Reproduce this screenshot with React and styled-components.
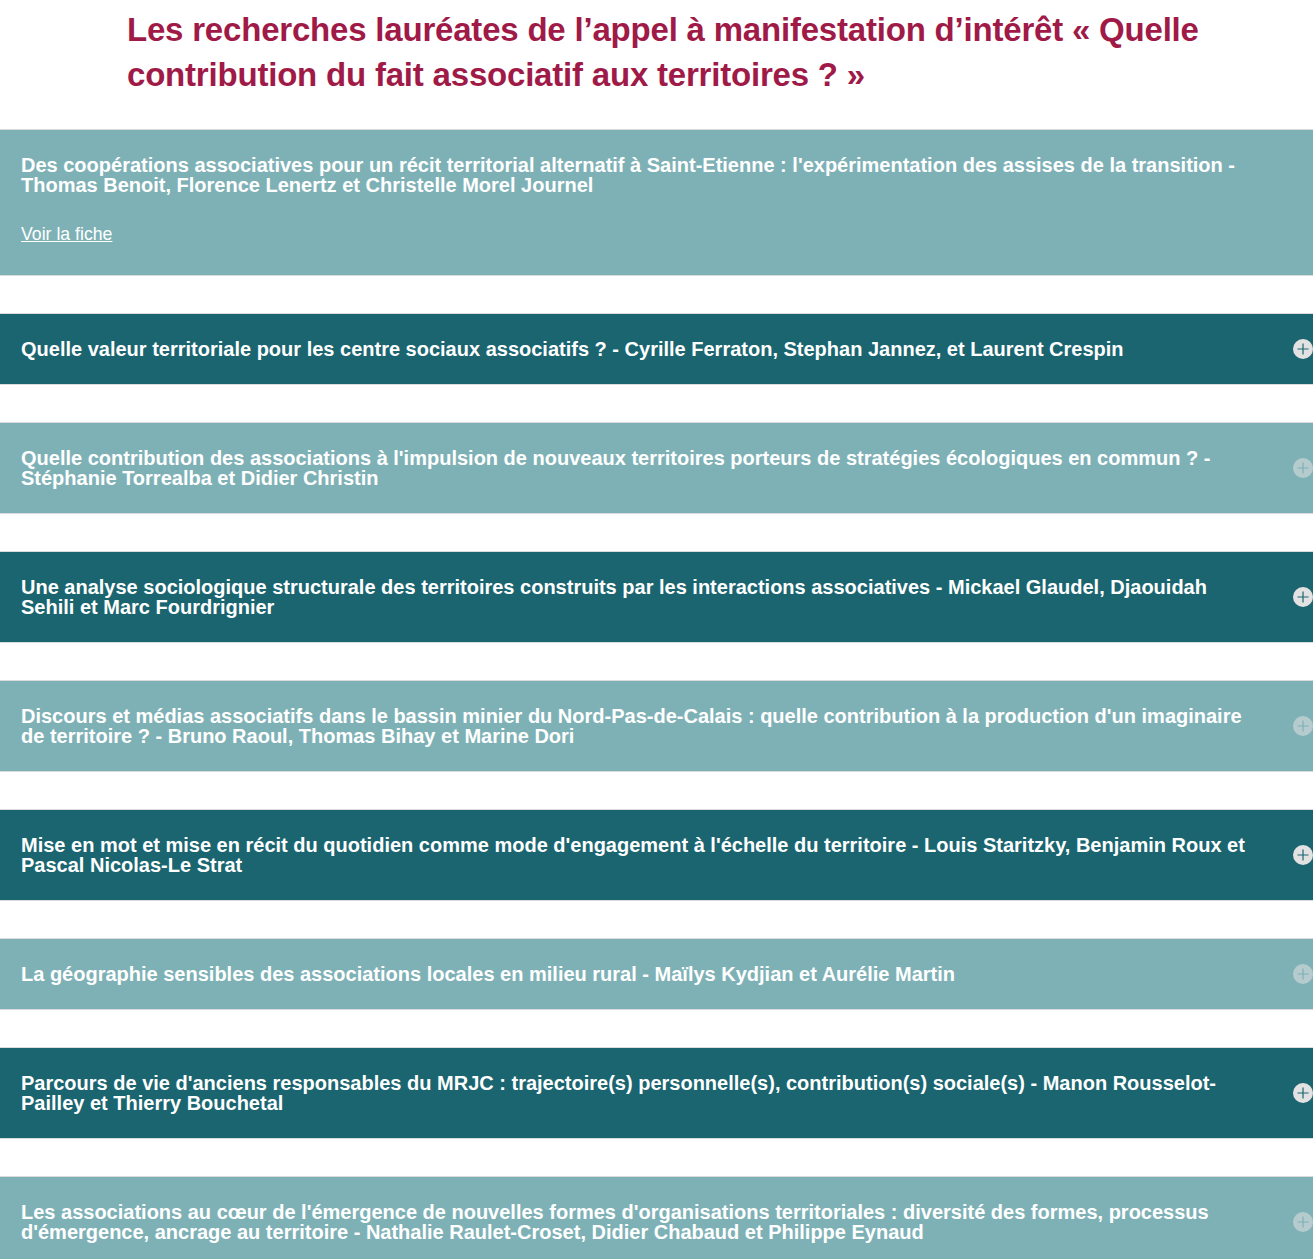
import React from "react";
import styled, { createGlobalStyle } from "styled-components";

const Global = createGlobalStyle`
  html, body { margin: 0; padding: 0; background: #fff; }
  body { font-family: "Liberation Sans", Arial, sans-serif; }
`;

const Page = styled.div`
  width: 1313px;
  overflow: hidden;
`;

const Title = styled.h1`
  margin: 0;
  padding: 7px 80px 32px 127px;
  color: #a01a48;
  font-family: "Liberation Sans", Arial, sans-serif;
  font-weight: 700;
  font-size: 33px;
  line-height: 45px;
  letter-spacing: -0.2px;
`;

const List = styled.div`
  display: flex;
  flex-direction: column;
  gap: 37px;
`;

const Panel = styled.div`
  background: ${(p) => (p.$dark ? "#1a6570" : "#7eb1b6")};
  border-top: 1px solid #d9dcdc;
  border-bottom: 1px solid #d9dcdc;
  display: flex;
  align-items: center;
  padding: 25px 0 25px 21px;
  ${(p) => p.$open && "align-items: flex-start; padding-bottom: 31px;"}
`;

const Body = styled.div`
  flex: 1;
  max-width: 1232px;
  display: flex;
  flex-direction: column;
  gap: 29px;
`;

const Heading = styled.div`
  color: #fff;
  font-weight: 700;
  font-size: 20px;
  line-height: 20px;
`;

const Link = styled.a`
  color: #fff;
  font-size: 17.7px;
  line-height: 20px;
  text-decoration: underline;
`;

const Toggle = styled.svg`
  flex: none;
  margin-left: auto;
  width: 20px;
  height: 20px;
  opacity: ${(p) => (p.$dark ? 1 : 0.55)};
`;

const PlusIcon = ({ dark }) => (
  <Toggle $dark={dark} viewBox="0 0 20 20">
    <circle cx="10" cy="10" r="10" fill="#e2e2e2" />
    <path d="M10 4.5v11M4.5 10h11" stroke={dark ? "#1a6570" : "#7eb1b6"} strokeWidth="1.2" />
  </Toggle>
);

const items = [
  "Quelle valeur territoriale pour les centre sociaux associatifs ? - Cyrille Ferraton, Stephan Jannez, et Laurent Crespin",
  "Quelle contribution des associations à l'impulsion de nouveaux territoires porteurs de stratégies écologiques en commun ? - Stéphanie Torrealba et Didier Christin",
  "Une analyse sociologique structurale des territoires construits par les interactions associatives - Mickael Glaudel, Djaouidah Sehili et Marc Fourdrignier",
  "Discours et médias associatifs dans le bassin minier du Nord-Pas-de-Calais : quelle contribution à la production d'un imaginaire de territoire ? - Bruno Raoul, Thomas Bihay et Marine Dori",
  "Mise en mot et mise en récit du quotidien comme mode d'engagement à l'échelle du territoire - Louis Staritzky, Benjamin Roux et Pascal Nicolas-Le Strat",
  "La géographie sensibles des associations locales en milieu rural - Maïlys Kydjian et Aurélie Martin",
  "Parcours de vie d'anciens responsables du MRJC : trajectoire(s) personnelle(s), contribution(s) sociale(s) - Manon Rousselot-Pailley et Thierry Bouchetal",
  "Les associations au cœur de l'émergence de nouvelles formes d'organisations territoriales : diversité des formes, processus d'émergence, ancrage au territoire - Nathalie Raulet-Croset, Didier Chabaud et Philippe Eynaud",
];

export default function App() {
  return (
    <Page>
      <Global />
      <Title>
        Les recherches lauréates de l’appel à manifestation d’intérêt « Quelle contribution du fait associatif aux territoires ? »
      </Title>
      <List>
        <Panel $open>
          <Body>
            <Heading>
              Des coopérations associatives pour un récit territorial alternatif à Saint-Etienne : l'expérimentation des assises de la transition - Thomas Benoit, Florence Lenertz et Christelle Morel Journel
            </Heading>
            <Link href="#">Voir la fiche</Link>
          </Body>
        </Panel>
        {items.map((t, i) => {
          const dark = i % 2 === 0;
          return (
            <Panel key={i} $dark={dark}>
              <Body>
                <Heading>{t}</Heading>
              </Body>
              <PlusIcon dark={dark} />
            </Panel>
          );
        })}
      </List>
    </Page>
  );
}
